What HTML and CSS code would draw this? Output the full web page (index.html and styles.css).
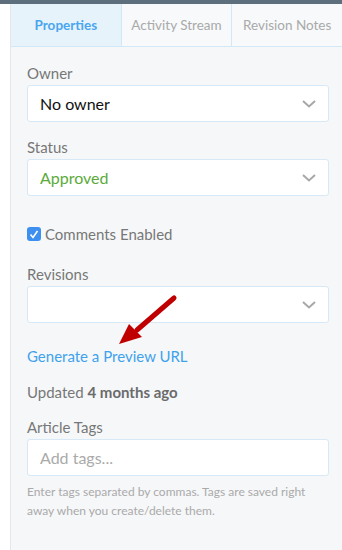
FILE: index.html
```html
<!DOCTYPE html>
<html lang="en">
<head>
    <meta charset="UTF-8">
    <title>Article Properties</title>
    <link rel="stylesheet" href="styles.css">
</head>
<body>

    <div class="topbar"></div>

    <div class="sidebar">
        <nav class="tabs">
            <a class="tab active" href="#">Properties</a>
            <a class="tab" href="#">Activity Stream</a>
            <a class="tab" href="#">Revision Notes</a>
        </nav>

        <section class="panel">
            <div class="field">
                <label>Owner</label>
                <div class="select">
                    <span>No owner</span>
                    <svg class="caret" width="14" height="8" viewBox="0 0 14 8"><path d="M1 1l6 5.5L13 1" fill="none" stroke="#a8a8a8" stroke-width="2"/></svg>
                </div>
            </div>

            <div class="field">
                <label>Status</label>
                <div class="select">
                    <span class="approved">Approved</span>
                    <svg class="caret" width="14" height="8" viewBox="0 0 14 8"><path d="M1 1l6 5.5L13 1" fill="none" stroke="#a8a8a8" stroke-width="2"/></svg>
                </div>
            </div>

            <div class="check">
                <span class="box">
                    <svg width="10" height="9" viewBox="0 0 10 9"><path d="M1.5 4.5l2.5 3L8.5 1" fill="none" stroke="#fff" stroke-width="1.6"/></svg>
                </span>
                Comments Enabled
            </div>

            <div class="field">
                <label>Revisions</label>
                <div class="select">
                    <span></span>
                    <svg class="caret" width="14" height="8" viewBox="0 0 14 8"><path d="M1 1l6 5.5L13 1" fill="none" stroke="#a8a8a8" stroke-width="2"/></svg>
                </div>
            </div>

            <div class="preview">
                <a href="#">Generate a Preview URL</a>
                <!-- red annotation arrow -->
                <svg class="arrow" width="62" height="52" viewBox="0 0 62 52">
                    <path d="M57 4L20 36" stroke="#c00000" stroke-width="5" stroke-linecap="round"/>
                    <path d="M2 50L12 30L25 43Z" fill="#c00000"/>
                </svg>
            </div>

            <p class="updated">Updated <b>4 months ago</b></p>

            <div class="field">
                <label>Article Tags</label>
                <div class="input">Add tags...</div>
                <p class="help">Enter tags separated by commas. Tags are saved right away when you create/delete them.</p>
            </div>
        </section>
    </div>

</body>
</html>
```

FILE: styles.css
```css
body {
    margin: 0;
    font-family: Lato, sans-serif;
    background: #fff;
    color: #777;
}

.topbar {
    height: 4px;
    background: #5d6e7c;
}

.sidebar {
    margin-left: 10px;
    border-left: 1px solid #e4e8ec;
    background: #f6f7f9;
    height: 546px;
}

.tabs {
    display: flex;
    background: #f7f9fb;
    border-bottom: 1px solid #d3e8f7;
    height: 42px;
}

.tab {
    display: flex;
    align-items: center;
    justify-content: center;
    width: 110px;
    border-right: 1px solid #d3e8f7;
    font-size: 13.5px;
    color: #a9a9a9;
    text-decoration: none;
    white-space: nowrap;
}

.tab.active {
    background: #e7f3fa;
    color: #4aa6ef;
    font-weight: bold;
}

.tab:last-child {
    border-right: none;
}

.panel {
    padding: 16px 13px 0 16px;
}

.field {
    margin-bottom: 15px;
}

.field label {
    display: block;
    font-size: 15px;
    line-height: 20px;
    margin-bottom: 2px;
}

.select, .input {
    display: flex;
    align-items: center;
    justify-content: space-between;
    height: 35px;
    padding: 0 12px;
    background: #fff;
    border: 1px solid #d7e9f6;
    border-radius: 3px;
    font-size: 16px;
    color: #111;
}

.input {
    color: #aaa;
}

.approved {
    color: #5bab3a;
}

.check {
    display: flex;
    align-items: center;
    font-size: 15px;
    line-height: 20px;
    margin: 28px 0 20px;
}

.box {
    display: flex;
    align-items: center;
    justify-content: center;
    width: 14px;
    height: 14px;
    background: #3d8ff0;
    border-radius: 3px;
    margin-right: 4px;
}

.preview {
    position: relative;
    margin-top: 23px;
    font-size: 15px;
    line-height: 20px;
}

.preview a {
    color: #3ea2ec;
    text-decoration: none;
}

.arrow {
    position: absolute;
    left: 90px;
    top: -52px;
}

.updated {
    font-size: 15px;
    line-height: 20px;
    margin: 16px 0 15px;
}

.updated b {
    color: #6b6b6b;
}

.help {
    font-size: 12px;
    line-height: 19px;
    color: #aaa;
    margin: 6px 0 0;
}
```
